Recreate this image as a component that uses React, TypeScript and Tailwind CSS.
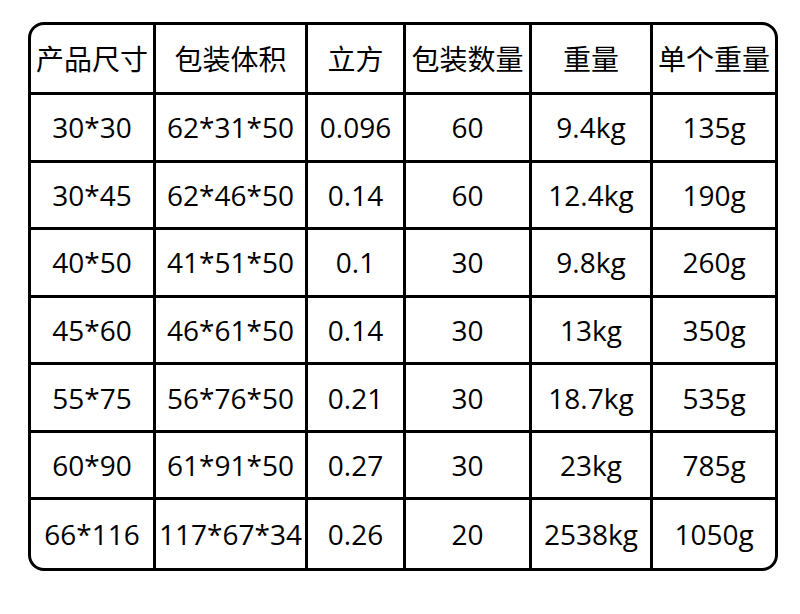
const HEADERS = ["产品尺寸", "包装体积", "立方", "包装数量", "重量", "单个重量"];

const ROWS: string[][] = [
  ["30*30", "62*31*50", "0.096", "60", "9.4kg", "135g"],
  ["30*45", "62*46*50", "0.14", "60", "12.4kg", "190g"],
  ["40*50", "41*51*50", "0.1", "30", "9.8kg", "260g"],
  ["45*60", "46*61*50", "0.14", "30", "13kg", "350g"],
  ["55*75", "56*76*50", "0.21", "30", "18.7kg", "535g"],
  ["60*90", "61*91*50", "0.27", "30", "23kg", "785g"],
  ["66*116", "117*67*34", "0.26", "20", "2538kg", "1050g"],
];

export default function App() {
  const all = [HEADERS, ...ROWS];
  return (
    <div className="w-[800px] h-[614px] bg-white pt-[22px] pl-[28px]" style={{ fontFamily: '"Open Sans", "Noto Sans CJK SC", sans-serif' }}>
      <div className="w-[750px] h-[549px] border-[3px] border-black rounded-[16px] overflow-hidden grid grid-cols-[125px_152px_98px_126px_121px_122px] grid-rows-[70px_repeat(7,1fr)] text-[28px] text-black">
        {all.map((row, r) =>
          row.map((cell, c) => (
            <div
              key={`${r}-${c}`}
              className={`flex items-center justify-center whitespace-nowrap leading-none ${c < 5 ? "border-r-[3px] border-black" : ""} ${r < all.length - 1 ? "border-b-[3px] border-black" : ""}`}
            >
              {cell}
            </div>
          ))
        )}
      </div>
    </div>
  );
}
